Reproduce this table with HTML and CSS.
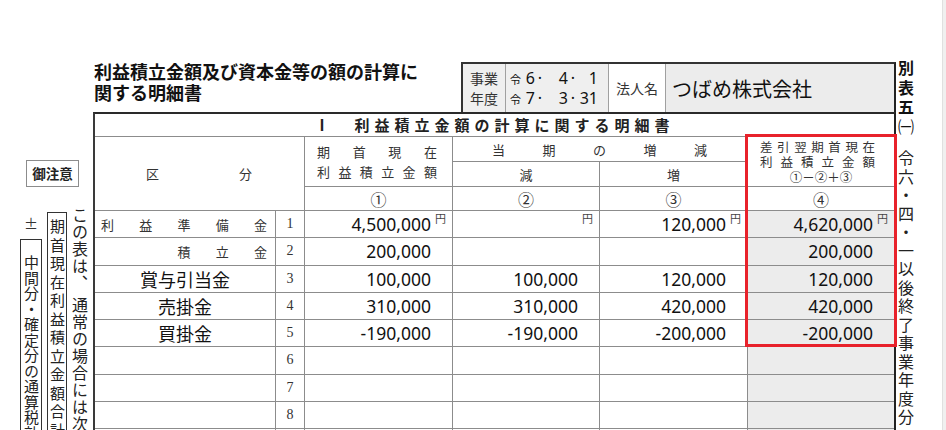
FILE: index.html
```html
<!DOCTYPE html>
<html lang="ja">
<head>
<meta charset="utf-8">
<title>別表五(一)</title>
<link rel="stylesheet" href="styles.css">
</head>
<body>
<div class="page">
  <aside class="notes">
    <div class="caution">御注意</div>
    <div class="note-cols">
      <p class="vcol c1">この表は、 通常の場合には次の式により検算ができます。</p>
      <p class="vcol c2">期首現在利益積立金額合計「31」①</p>
      <div class="c3">
        <span class="pm">±</span>
        <p class="vcol c3box">中間分・確定分の通算税効果額の合計額</p>
      </div>
    </div>
  </aside>

  <main class="main">
    <header class="head">
      <h1 class="title">利益積立金額及び資本金等の額の計算に<br>関する明細書</h1>
      <div class="idbox">
        <div class="cell period">事業<br>年度</div>
        <div class="cell dates">
          <div class="date"><span class="era">令</span><span class="r">6</span><span class="dot">·</span><span class="r">4</span><span class="dot">·</span><span class="r">1</span></div>
          <div class="date"><span class="era">令</span><span class="r">7</span><span class="dot">·</span><span class="r">3</span><span class="dot">·</span><span class="r">31</span></div>
        </div>
        <div class="cell corp">法人名</div>
        <div class="cell name">つばめ株式会社</div>
      </div>
    </header>

    <section class="sheet">
      <div class="grid">
        <div class="sect">Ⅰ　利益積立金額の計算に関する明細書</div>

        <div class="kubun"><span>区</span><span>分</span></div>
        <div class="h1c">
          <div class="dist"><span>期</span><span>首</span><span>現</span><span>在</span></div>
          <div class="dist"><span>利</span><span>益</span><span>積</span><span>立</span><span>金</span><span>額</span></div>
        </div>
        <div class="hchg dist"><span>当</span><span>期</span><span>の</span><span>増</span><span>減</span></div>
        <div class="hsub hdec">減</div>
        <div class="hsub hinc">増</div>
        <div class="h4c">
          <div class="dist"><span>差</span><span>引</span><span>翌</span><span>期</span><span>首</span><span>現</span><span>在</span></div>
          <div class="dist"><span>利</span><span>益</span><span>積</span><span>立</span><span>金</span><span>額</span></div>
          <div class="formula">①－②＋③</div>
        </div>
        <div class="circ c-1">①</div>
        <div class="circ c-2">②</div>
        <div class="circ c-3">③</div>
        <div class="circ c-4">④</div>

        <!-- row 1 -->
        <div class="lbl dist small"><span>利</span><span>益</span><span>準</span><span>備</span><span>金</span></div>
        <div class="no">1</div>
        <div class="amt"><span class="v">4,500,000</span><span class="yen">円</span></div>
        <div class="amt"><span class="v"></span><span class="yen">円</span></div>
        <div class="amt"><span class="v">120,000</span><span class="yen">円</span></div>
        <div class="amt g"><span class="v">4,620,000</span><span class="yen">円</span></div>
        <!-- row 2 -->
        <div class="lbl dist small"><span></span><span></span><span>積</span><span>立</span><span>金</span></div>
        <div class="no">2</div>
        <div class="amt"><span class="v">200,000</span><span class="yen"></span></div>
        <div class="amt"></div>
        <div class="amt"></div>
        <div class="amt g"><span class="v">200,000</span><span class="yen"></span></div>
        <!-- row 3 -->
        <div class="lbl big">賞与引当金</div>
        <div class="no">3</div>
        <div class="amt"><span class="v">100,000</span><span class="yen"></span></div>
        <div class="amt"><span class="v">100,000</span><span class="yen"></span></div>
        <div class="amt"><span class="v">120,000</span><span class="yen"></span></div>
        <div class="amt g"><span class="v">120,000</span><span class="yen"></span></div>
        <!-- row 4 -->
        <div class="lbl big">売掛金</div>
        <div class="no">4</div>
        <div class="amt"><span class="v">310,000</span><span class="yen"></span></div>
        <div class="amt"><span class="v">310,000</span><span class="yen"></span></div>
        <div class="amt"><span class="v">420,000</span><span class="yen"></span></div>
        <div class="amt g"><span class="v">420,000</span><span class="yen"></span></div>
        <!-- row 5 -->
        <div class="lbl big">買掛金</div>
        <div class="no">5</div>
        <div class="amt"><span class="v">-190,000</span><span class="yen"></span></div>
        <div class="amt"><span class="v">-190,000</span><span class="yen"></span></div>
        <div class="amt"><span class="v">-200,000</span><span class="yen"></span></div>
        <div class="amt g"><span class="v">-200,000</span><span class="yen"></span></div>
        <!-- rows 6-10 -->
        <div class="lbl"></div><div class="no">6</div><div class="amt"></div><div class="amt"></div><div class="amt"></div><div class="amt g"></div>
        <div class="lbl"></div><div class="no">7</div><div class="amt"></div><div class="amt"></div><div class="amt"></div><div class="amt g"></div>
        <div class="lbl"></div><div class="no">8</div><div class="amt"></div><div class="amt"></div><div class="amt"></div><div class="amt g"></div>
        <div class="lbl"></div><div class="no">9</div><div class="amt"></div><div class="amt"></div><div class="amt"></div><div class="amt g"></div>
        <div class="lbl"></div><div class="no">10</div><div class="amt"></div><div class="amt"></div><div class="amt"></div><div class="amt g"></div>
      </div>
      <div class="highlight"></div>
    </section>
  </main>

  <aside class="side">
    <p class="form-id">別表五<span class="paren">㈠</span></p>
    <p class="applies">令六・四・一以後終了事業年度分</p>
  </aside>
</div>
</body>
</html>
```

FILE: styles.css
```css
* { box-sizing: border-box; margin: 0; padding: 0; }

html, body {
  width: 946px;
  height: 430px;
  overflow: hidden;
}

body {
  background: #f0f0f0;
  font-family: "Noto Sans CJK JP", "Noto Sans", sans-serif;
  color: #222;
}

.page {
  display: flex;
  width: 943px;
  height: 430px;
  background: #fff;
  border-right: 1px solid #e0e0e0;
  overflow: hidden;
}

/* ---------- left notes ---------- */
.notes {
  width: 93px;
  flex: none;
  padding-top: 160px;
}

.caution {
  width: 53px;
  height: 27px;
  margin-left: 26px;
  border: 1px solid #8c8c8c;
  font-size: 13.5px;
  font-weight: 700;
  line-height: 25px;
  text-align: center;
  color: #222;
}

.note-cols {
  display: flex;
  flex-direction: row-reverse;
  align-items: flex-start;
  margin-top: 20px;
  padding-right: 5px;
}

.vcol {
  writing-mode: vertical-rl;
  white-space: nowrap;
  color: #222;
}

.c1 {
  font-size: 16px;
  line-height: 17px;
  letter-spacing: 1px;
}

.c2 {
  margin-top: 5px;
  margin-right: 4px;
  padding-top: 6px;
  border: 1px solid #333;
  font-size: 15px;
  line-height: 18px;
  letter-spacing: 3.5px;
}

.c3 {
  display: flex;
  flex-direction: column;
  align-items: center;
  margin-right: 5px;
}

.pm {
  margin-top: 8px;
  font-size: 14px;
  line-height: 16px;
  color: #333;
}

.c3box {
  margin-top: 8px;
  padding-top: 15px;
  border: 1px solid #333;
  font-size: 15px;
  line-height: 20px;
  letter-spacing: 0.5px;
}

/* ---------- main ---------- */
.main {
  width: 803px;
  flex: none;
  padding-top: 62px;
}

.head {
  display: flex;
  justify-content: space-between;
  height: 50px;
}

.title {
  margin-top: -1.5px;
  padding-left: 1px;
  font-size: 18px;
  line-height: 21px;
  font-weight: 700;
  color: #111;
}

.idbox {
  display: flex;
  width: 435px;
  height: 50px;
  border-top: 2px solid #333;
  border-left: 2px solid #333;
  border-right: 2px solid #222;
}

.cell {
  display: flex;
  flex-direction: column;
  justify-content: center;
  color: #333;
}

.period {
  width: 42px;
  align-items: center;
  font-size: 14px;
  line-height: 20px;
  background: #efefef;
}

.dates {
  width: 103px;
  padding-left: 4px;
  border-left: 1px solid #a0a0a0;
  background: #efefef;
}

.date {
  display: grid;
  grid-template-columns: 12px 13px 10px 23px 10px 20px;
  align-items: baseline;
  height: 20px;
  font-family: "Noto Sans", sans-serif;
  font-size: 16px;
  line-height: 20px;
  color: #111;
}

.date .era {
  font-family: "Noto Sans CJK JP", sans-serif;
  font-size: 11px;
}

.date .r { text-align: right; }
.date .dot { text-align: center; }

.corp {
  width: 57px;
  align-items: center;
  border-left: 1px solid #a0a0a0;
  font-size: 14px;
  background: #fff;
}

.name {
  flex: 1;
  padding-left: 6px;
  border-left: 1px solid #a0a0a0;
  font-size: 20px;
  color: #111;
  background: #ececec;
}

/* ---------- sheet ---------- */
.sheet {
  position: relative;
}

.grid {
  display: grid;
  grid-template-columns: 180px 28px 147px 146px 147px 146px;
  grid-template-rows: 22px 24px 24px 23px repeat(10, 26.25px);
  gap: 1px;
  background: #8c8c8c;
  border-top: 2px solid #2a2a2a;
  border-left: 2px solid #3a3a3a;
  border-right: 2px solid #222;
}

.grid > div {
  background: #fff;
  color: #333;
  font-size: 13px;
}

.dist {
  display: flex;
  justify-content: space-between;
}

.dist > span { width: 1em; text-align: center; }

.sect {
  grid-column: 1 / -1;
  text-align: center;
  font-size: 15px !important;
  font-weight: 700;
  letter-spacing: 5px;
  line-height: 22px;
  color: #222 !important;
}

.kubun {
  grid-column: 1 / 3;
  grid-row: 2 / 5;
  display: flex;
  align-items: center;
  justify-content: space-between;
  padding: 0 52px 0 51px;
}

.h1c {
  grid-column: 3;
  grid-row: 2 / 4;
  display: flex;
  flex-direction: column;
  justify-content: center;
  padding: 0 15px 0 12px;
  line-height: 20px;
}

.hchg {
  grid-column: 4 / 6;
  grid-row: 2;
  align-items: center;
  padding: 0 40px 0 39px;
}

.hsub {
  grid-row: 3;
  display: flex;
  align-items: center;
  justify-content: center;
}

.hdec { grid-column: 4; }
.hinc { grid-column: 5; }

.grid > .h4c {
  grid-column: 6;
  grid-row: 2 / 4;
  display: flex;
  flex-direction: column;
  justify-content: center;
  padding: 0 19px 0 12px;
  font-size: 12.5px;
  line-height: 15px;
}

.formula {
  text-align: center;
  padding-left: 7px;
}

.circ {
  grid-row: 4;
  display: flex;
  align-items: center;
  justify-content: center;
  font-size: 16px !important;
}

.c-1 { grid-column: 3; }
.c-2 { grid-column: 4; }
.c-3 { grid-column: 5; }
.c-4 { grid-column: 6; }

.lbl {
  display: flex;
  align-items: center;
}

.lbl.small {
  justify-content: space-between;
  padding: 0 8px 0 6px;
}

.lbl.big {
  justify-content: center;
  font-size: 18px !important;
  color: #111 !important;
}

.no {
  display: flex;
  align-items: center;
  justify-content: center;
  font-family: "Liberation Serif", serif;
  font-size: 14px !important;
}

.amt {
  display: flex;
  justify-content: flex-end;
  align-items: center;
  font-family: "Noto Sans", sans-serif;
  color: #111 !important;
}

.amt .v {
  font-size: 17.5px;
  line-height: 26px;
}

.amt .yen {
  align-self: flex-start;
  width: 21px;
  padding-left: 4px;
  margin-top: 1px;
  font-family: "Noto Sans CJK JP", sans-serif;
  font-size: 11px;
  line-height: 12px;
  color: #444;
}

.grid > .g { background: #ececec; }

.highlight {
  position: absolute;
  left: 652px;
  top: 22px;
  width: 152px;
  height: 213px;
  border: 3px solid #e8222b;
  pointer-events: none;
}

/* ---------- right side ---------- */
.side {
  flex: none;
  width: 47px;
  padding: 60px 0 0 2px;
  display: flex;
  flex-direction: column;
  align-items: flex-start;
}

.form-id {
  writing-mode: vertical-rl;
  font-size: 16px;
  font-weight: 700;
  line-height: 16px;
  letter-spacing: 3.5px;
  color: #111;
}

.form-id .paren { font-weight: 400; }

.applies {
  writing-mode: vertical-rl;
  white-space: nowrap;
  margin-top: 12px;
  font-size: 16px;
  line-height: 16px;
  letter-spacing: 2.5px;
  color: #222;
}
```
